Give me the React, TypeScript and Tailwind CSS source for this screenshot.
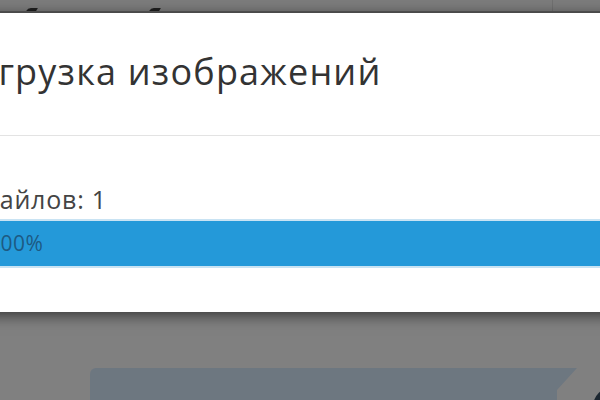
import React from "react";

export default function App() {
  return (
    <div
      className="w-[600px] h-[400px] overflow-hidden bg-[#808080] flex flex-col"
      style={{ fontFamily: '"Open Sans", "Noto Sans", sans-serif' }}
    >
      {/* strip of page behind the overlay */}
      <div className="h-[13px] shrink-0 flex items-end bg-[#7c7c7c] border-b-2 border-[#5c5c5c]">
        <div className="ml-[27px] w-[10px] h-[3px] bg-[#1f1f1f] rounded-tl-[6px] -skew-x-[30deg]" />
        <div className="ml-[113px] w-[10px] h-[3px] bg-[#1f1f1f] rounded-tl-[6px] -skew-x-[30deg]" />
        <div className="ml-[392px] w-px h-[11px] bg-[#707070]" />
      </div>

      {/* dialog */}
      <div className="-ml-[50px] w-[700px] shrink-0 bg-white shadow-[0_3px_14px_rgba(0,0,0,0.6)] relative">
        <div className="pl-[5px] pt-[41px] pb-[45px] border-b border-[#e3e3e3]">
          <h2 className="text-[36px] leading-[36px] tracking-[1.2px] text-[#333333] font-normal whitespace-nowrap">
            Загрузка изображений
          </h2>
        </div>
        <div className="pt-[51px] pb-[44px]">
          <div className="pl-[29px] text-[25px] leading-[25px] tracking-[0.8px] text-[#444444] whitespace-nowrap">
            Файлов: 1
          </div>
          <div className="mt-[7px] h-[49px] border-y-2 border-[#c9e3f3] bg-[#2499d9] flex items-center pl-[38px]">
            <span className="text-[21px] leading-[45px] tracking-[0.5px] text-[#1d5a83]">100%</span>
          </div>
        </div>
      </div>

      {/* content below the dialog */}
      <div className="mt-[56px] flex items-start shrink-0">
        <div className="ml-[90px] w-[487px] h-[40px] shrink-0 bg-[#6d7780] rounded-tl-[6px] [clip-path:polygon(0_0,100%_0,467px_22px,467px_100%,0_100%)]" />
        <div className="ml-[16px] mt-[19px] w-[40px] h-[40px] rounded-full bg-[#1c2731] shrink-0" />
      </div>
    </div>
  );
}
